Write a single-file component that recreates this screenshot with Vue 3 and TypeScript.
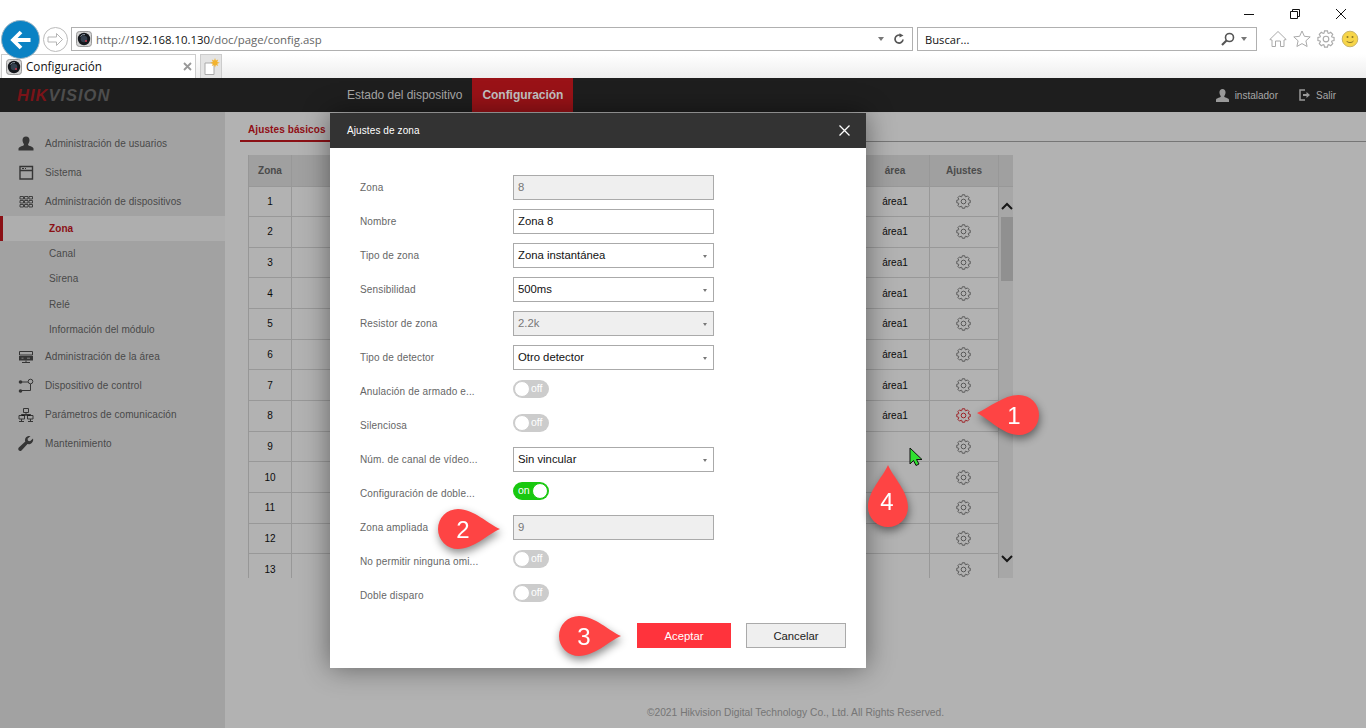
<template>
  <div class="screen">
    <!-- browser chrome -->
    <header class="chrome">
      <div class="win-controls">
        <svg width="12" height="12" viewBox="0 0 12 12"><path d="M1 6.500h10" stroke="#111" fill="none" /></svg>
        <svg width="12" height="12" viewBox="0 0 12 12"><path d="M1.500 3.500h7v7h-7zM3.500 3.500v-2h7v7h-2" stroke="#111" fill="none" /></svg>
        <svg width="12" height="12" viewBox="0 0 12 12"><path d="M1 1l10 10M11 1L1 11" stroke="#111" fill="none" /></svg>
      </div>
      <div class="nav-row">
        <div class="back">
          <svg width="24" height="22" viewBox="0 0 24 22"><path d="M21.500 11H5M12 3l-8 8 8 8" stroke="#fff" stroke-width="3.800" fill="none" /></svg>
        </div>
        <div class="forward">
          <svg width="17" height="15" viewBox="0 0 17 15"><path d="M1 5h8.500V1.500L15.500 7.500 9.500 13.500V10H1z" stroke="#b5b5b5" fill="#fff" /></svg>
        </div>
        <div class="address">
          <svg class="favicon" width="16" height="16" viewBox="0 0 16 16">
            <rect x=".5" y=".5" width="15" height="15" rx="3" fill="#d4d4d4" stroke="#999" />
            <circle cx="8" cy="8" r="6.200" fill="#14171c" />
            <circle cx="8" cy="8" r="3.300" fill="#34404e" />
            <path d="M4.500 5.500A4.500 4.500 0 0 1 9 3.600" stroke="#8a97a6" fill="none" />
            <circle cx="10" cy="10" r="1.100" fill="#c2344a" />
          </svg>
          <span class="url">http://<b>192.168.10.130</b>/doc/page/config.asp</span>
          <span class="caret"></span>
          <svg class="refresh" width="12" height="12" viewBox="0 0 12 12"><path d="M10 6.500A4 4 0 1 1 7.500 2.300" stroke="#555" stroke-width="1.700" fill="none" /><path d="M6.500 .2l4 2.300-4 2z" fill="#555" /></svg>
        </div>
        <div class="search">
          <span class="search-text">Buscar...</span>
          <svg class="magnifier" width="14" height="14" viewBox="0 0 14 14"><circle cx="8.500" cy="5.500" r="4" stroke="#555" stroke-width="1.600" fill="none" /><path d="M5.500 8.500L1 13" stroke="#555" stroke-width="2.200" /></svg>
          <span class="caret"></span>
        </div>
        <div class="tools">
          <svg width="18" height="18" viewBox="0 0 18 18"><path d="M.8 9.500L9 1.500l8.200 8-2.200.5v6.500h-3.500V11h-5v5.500H3V10z" stroke="#aaa" fill="#fff" /></svg>
          <svg width="18" height="18" viewBox="0 0 18 18"><path d="M9 1l2.400 5.300 5.800.6-4.300 3.900 1.200 5.700L9 13.600l-5.100 2.900 1.200-5.700L.8 6.900l5.800-.6z" stroke="#aaa" fill="#fff" /></svg>
          <svg width="18" height="18" viewBox="0 0 16 16"><path :d="gearPath" stroke="#aaa" fill="#fff" /><circle cx="8" cy="8" r="2.500" stroke="#aaa" fill="none" /></svg>
          <svg width="18" height="18" viewBox="0 0 18 18">
            <circle cx="9" cy="9" r="7.800" fill="#f7d548" stroke="#c9b46a" />
            <circle cx="6.500" cy="7" r="1" fill="#8a7628" /><circle cx="11.500" cy="7" r="1" fill="#8a7628" />
            <path d="M5.500 11c1.500 2 5.500 2 7 0" stroke="#8a7628" fill="none" />
          </svg>
        </div>
      </div>
      <div class="tab-row">
        <div class="tab">
          <svg width="16" height="16" viewBox="0 0 16 16">
            <rect x=".5" y=".5" width="15" height="15" rx="3" fill="#d4d4d4" stroke="#999" />
            <circle cx="8" cy="8" r="6.200" fill="#14171c" />
            <circle cx="8" cy="8" r="3.300" fill="#34404e" />
            <path d="M4.500 5.500A4.500 4.500 0 0 1 9 3.600" stroke="#8a97a6" fill="none" />
            <circle cx="10" cy="10" r="1.100" fill="#c2344a" />
          </svg>
          <span class="tab-title">Configuración</span>
          <svg class="tab-close" width="9" height="9" viewBox="0 0 9 9"><path d="M1 1l7 7M8 1L1 8" stroke="#999" stroke-width="1.800" /></svg>
        </div>
        <div class="new-tab">
          <svg width="18" height="18" viewBox="0 0 18 18">
            <path d="M3 5h9v11.500H3z" fill="#fff" stroke="#aaa" />
            <path d="M13 0l.9 2.600 2.300-1-1 2.300 2.600.9-2.600.9 1 2.300-2.300-1L13 9.600l-.9-2.600-2.300 1 1-2.300-2.600-.9 2.600-.9-1-2.300 2.300 1z" fill="#f3b32e" />
          </svg>
        </div>
      </div>
    </header>

    <!-- device page -->
    <div class="page">
      <div class="topbar">
        <div class="logo"><span class="logo-red">HIK</span>VISION</div>
        <nav class="main-nav">
          <a class="main-link">Estado del dispositivo</a>
          <a class="main-link main-link--active">Configuración</a>
        </nav>
        <div class="user-box">
          <svg width="13" height="13" viewBox="0 0 14 14"><path d="M7 0c2 0 3.300 1.500 3.300 3.700S9 7 8.800 8c0 1 4.700 1.500 5.200 3.500V14H0v-2.500C.5 9.500 5.200 9 5.200 8 5 7 3.700 5.900 3.700 3.700S5 0 7 0z" fill="#999" /></svg>
          <span class="user-name">instalador</span>
          <svg class="logout-icon" width="11" height="12" viewBox="0 0 11 12"><path d="M6 1H1v10h5" stroke="#999" stroke-width="1.500" fill="none" /><path d="M4 5h3.500V3L11 6 7.500 9V7H4z" fill="#999" /></svg>
          <span class="user-name">Salir</span>
        </div>
      </div>

      <div class="body">
        <aside class="sidebar">
          <div
            v-for="item in menu"
            :key="item.label"
            class="menu-item"
            :class="{ 'menu-item--sub': item.sub, 'menu-item--active': item.active }"
            :style="{ height: item.h + 'px' }"
          >
            <svg v-if="item.icon" class="menu-icon" width="16" height="16" viewBox="0 0 16 16" v-html="item.icon"></svg>
            <span>{{ item.label }}</span>
          </div>
        </aside>

        <main class="content">
          <div class="tabs"><span class="tabs-active">Ajustes básicos</span></div>
          <div class="table-wrap">
            <div class="table-head">
              <div class="cell cell--zona">Zona</div>
              <div class="cell cell--mid"></div>
              <div class="cell cell--area">área</div>
              <div class="cell cell--set">Ajustes</div>
              <div class="cell cell--bar"></div>
            </div>
            <div class="table-body">
              <div class="rows">
                <div v-for="n in 13" :key="n" class="row">
                  <div class="cell cell--zona">{{ n }}</div>
                  <div class="cell cell--mid"></div>
                  <div class="cell cell--area">{{ n <= 8 ? 'área1' : '' }}</div>
                  <div class="cell cell--set">
                    <svg class="gear" width="15" height="15" viewBox="0 0 16 16">
                      <path :d="gearPath" :stroke="n === 8 ? '#e0242c' : '#777'" fill="none" />
                      <circle cx="8" cy="8" r="2.500" :stroke="n === 8 ? '#e0242c' : '#777'" fill="none" />
                    </svg>
                  </div>
                </div>
              </div>
              <div class="scroll">
                <svg class="chev chev--up" width="12" height="8" viewBox="0 0 12 8"><path d="M1 7l5-5 5 5" stroke="#222" stroke-width="2" fill="none" /></svg>
                <div class="thumb"></div>
                <svg class="chev chev--down" width="12" height="8" viewBox="0 0 12 8"><path d="M1 1l5 5 5-5" stroke="#222" stroke-width="2" fill="none" /></svg>
              </div>
            </div>
          </div>
          <div class="copyright">©2021 Hikvision Digital Technology Co., Ltd. All Rights Reserved.</div>
        </main>
      </div>

      <div class="dim"></div>

      <!-- modal over the dimmed page -->
      <section class="modal">
        <div class="modal-head">
          <span>Ajustes de zona</span>
          <svg width="11" height="11" viewBox="0 0 11 11"><path d="M.5.5l10 10M10.500.5l-10 10" stroke="#fff" stroke-width="1.300" /></svg>
        </div>
        <div class="form">
          <div v-for="f in fields" :key="f.label" class="form-row">
            <label class="form-label">{{ f.label }}</label>
            <div v-if="f.kind === 'toggle'" class="toggle" :class="{ 'toggle--on': f.on }">
              <span class="toggle-text">{{ f.on ? 'on' : 'off' }}</span>
              <span class="knob"></span>
            </div>
            <div v-else class="field" :class="{ 'field--off': f.disabled }">
              {{ f.value }}
              <span v-if="f.kind === 'select'" class="field-caret"></span>
            </div>
          </div>
        </div>
        <div class="modal-foot">
          <button class="btn btn--ok">Aceptar</button>
          <button class="btn btn--cancel">Cancelar</button>
        </div>
      </section>
    </div>

    <!-- annotations -->
    <svg
      v-for="c in callouts"
      :key="c.text"
      class="callout"
      :class="'callout--' + c.text"
      :width="c.w"
      :height="c.h"
      :viewBox="`0 0 ${c.w} ${c.h}`"
    >
      <path :d="c.d" fill="#fe4444" />
      <text :x="c.tx" :y="c.ty" text-anchor="middle" class="callout-num">{{ c.text }}</text>
    </svg>
    <svg class="pointer" width="14" height="20" viewBox="0 0 14 20"><path d="M1 1v16l3.500-3.500L7 18.500l3-1.500-2.500-4.500H13z" fill="#2fe02f" stroke="#111" /></svg>
  </div>
</template>

<script setup lang="ts">
type Field = {
  label: string
  kind: 'text' | 'select' | 'toggle'
  value?: string
  disabled?: boolean
  on?: boolean
}

type MenuItem = {
  label: string
  h: number
  icon?: string
  sub?: boolean
  active?: boolean
}

const C = '#4c4c4c'

const menu: MenuItem[] = [
  { label: 'Administración de usuarios', h: 29, icon: `<path d="M8 .5c2.300 0 3.500 1.600 3.500 3.800S10 8 10 9c.5 1 5 1.300 5.500 3.500v2H.5v-2C1 10.300 5.500 10 6 9 6 8 4.500 6.500 4.500 4.300S5.700.5 8 .5z" fill="${C}"/>` },
  { label: 'Sistema', h: 29, icon: `<path d="M2 1.500h12.500v12.500H2zM2 5.500h12.500" stroke="${C}" stroke-width="1.400" fill="none"/><path d="M4 3.500h2M7 3.500h1" stroke="${C}"/>` },
  { label: 'Administración de dispositivos', h: 29, icon: `<path d="M2 2.500h3.500v2.500H2zM6.500 2.500H10v2.500H6.500zM11 2.500h3.500v2.500H11zM2 6.500h3.500v2.500H2zM6.500 6.500H10v2.500H6.500zM11 6.500h3.500v2.500H11zM2 10.500h3.500v2.500H2zM6.500 10.500H10v2.500H6.500zM11 10.500h3.500v2.500H11z" fill="none" stroke="${C}" stroke-width=".9"/>` },
  { label: 'Zona', h: 25, sub: true, active: true },
  { label: 'Canal', h: 25, sub: true },
  { label: 'Sirena', h: 25, sub: true },
  { label: 'Relé', h: 26, sub: true },
  { label: 'Información del módulo', h: 25, sub: true },
  { label: 'Administración de la área', h: 29, icon: `<path d="M1.500 2.500h13v3.500h-13z" stroke="${C}" fill="none"/><path d="M1 7h14v4.500H1z" fill="${C}"/><path d="M8 11.500v2M4 13.500h8" stroke="${C}"/><path d="M3.500 9.200h2M9 9.200h3" stroke="#bbb"/>` },
  { label: 'Dispositivo de control', h: 29, icon: `<circle cx="2.500" cy="4" r="1.800" fill="${C}"/><circle cx="2.500" cy="13" r="1.800" fill="${C}"/><circle cx="12.500" cy="3.500" r="2.300" stroke="${C}" fill="none"/><path d="M4 4h6M12.500 6v6.500H4" stroke="${C}" fill="none"/>` },
  { label: 'Parámetros de comunicación', h: 29, icon: `<path d="M5.500 1.500h5v4h-5zM1 8.500h5.500v3.500H1zM9.500 8.500H15v3.500H9.500z" stroke="${C}" fill="none"/><path d="M8 5.500V7.500M3.500 8.500v-1h9v1M3.500 12v2M12.500 12v2M1 14.500h5M10 14.500h5" stroke="${C}"/>` },
  { label: 'Mantenimiento', h: 29, icon: `<path d="M15 2.500l-3 2.800-2-.6-.5-2L12.500 0C10-.5 7 1 7 4c0 .7.100 1.200.3 1.600L.8 11.500c-.8.900-.7 2.300.1 3 .7.600 1.900.6 2.600-.1l6-6.300c3 .8 6.500-2 5.500-5.600z" fill="${C}"/>` }
]

const fields: Field[] = [
  { label: 'Zona', kind: 'text', value: '8', disabled: true },
  { label: 'Nombre', kind: 'text', value: 'Zona 8' },
  { label: 'Tipo de zona', kind: 'select', value: 'Zona instantánea' },
  { label: 'Sensibilidad', kind: 'select', value: '500ms' },
  { label: 'Resistor de zona', kind: 'select', value: '2.2k', disabled: true },
  { label: 'Tipo de detector', kind: 'select', value: 'Otro detector' },
  { label: 'Anulación de armado e...', kind: 'toggle' },
  { label: 'Silenciosa', kind: 'toggle' },
  { label: 'Núm. de canal de vídeo...', kind: 'select', value: 'Sin vincular' },
  { label: 'Configuración de doble...', kind: 'toggle', on: true },
  { label: 'Zona ampliada', kind: 'text', value: '9', disabled: true },
  { label: 'No permitir ninguna omi...', kind: 'toggle' },
  { label: 'Doble disparo', kind: 'toggle' }
]

const callouts = [
  { text: '1', w: 62, h: 40, tx: 37, ty: 29, d: 'M0 18 C12 13 26 0 42 0 A20 20 0 0 1 42 40 C26 40 12 24 0 18Z' },
  { text: '2', w: 62, h: 40, tx: 25, ty: 29, d: 'M62 20 C50 15 36 0 20 0 A20 20 0 0 0 20 40 C36 40 50 25 62 20Z' },
  { text: '3', w: 62, h: 40, tx: 25, ty: 29, d: 'M62 20 C50 15 36 0 20 0 A20 20 0 0 0 20 40 C36 40 50 25 62 20Z' },
  { text: '4', w: 40, h: 62, tx: 19, ty: 45, d: 'M20 0 C25 12 40 26 40 42 A20 20 0 0 1 0 42 C0 26 15 12 20 0Z' }
]

// contorno de engranaje de 8 dientes, centrado en 8,8
const gearPath = (() => {
  const pts: string[] = []
  const step = Math.PI / 4
  for (let i = 0; i < 8; i++) {
    const a = i * step - Math.PI / 2
    const list: [number, number][] = [
      [5.6, a - 0.32],
      [7.3, a - 0.18],
      [7.3, a + 0.18],
      [5.6, a + 0.32]
    ]
    for (const [r, t] of list) {
      pts.push(`${(8 + r * Math.cos(t)).toFixed(2)} ${(8 + r * Math.sin(t)).toFixed(2)}`)
    }
  }
  return 'M' + pts.join('L') + 'Z'
})()
</script>

<style scoped>
.screen {
  position: relative;
  width: 1366px;
  height: 728px;
  overflow: hidden;
  background: #fff;
  font-family: "Liberation Sans", Arial, sans-serif;
}

/* chrome */
.chrome {
  height: 78px;
  background: #fff;
  font-family: "Open Sans", "Noto Sans", sans-serif;
  font-size: 12px;
  color: #111;
}

.win-controls {
  height: 27px;
  display: flex;
  justify-content: flex-end;
  align-items: flex-start;
  gap: 34px;
  padding: 8px 19px 0 0;
  box-sizing: border-box;
}

.nav-row {
  display: flex;
  align-items: center;
  height: 24px;
}

.back {
  width: 37px;
  height: 37px;
  margin-left: 1px;
  margin-top: 1px;
  border-radius: 50%;
  background: #0a82c4;
  border: 1px solid #9fb6c4;
  display: flex;
  align-items: center;
  justify-content: center;
  flex: none;
  box-sizing: content-box;
  position: relative;
  z-index: 1;
}

.forward {
  width: 23px;
  height: 23px;
  margin-left: 3px;
  border: 1px solid #bbb;
  border-radius: 50%;
  display: flex;
  align-items: center;
  justify-content: center;
  flex: none;
}

.address,
.search {
  height: 24px;
  box-sizing: border-box;
  border: 1px solid #b0b0b0;
  display: flex;
  align-items: center;
}

.address {
  width: 842px;
  margin-left: 3px;
  padding-left: 4px;
}

.url {
  margin-left: 4px;
  color: #666;
  flex: 1;
  font-size: 11.400px;
}

.url b {
  font-weight: 400;
  color: #111;
}

.caret {
  width: 0;
  height: 0;
  border: 3.500px solid transparent;
  border-top: 4px solid #777;
  border-bottom: 0;
}

.refresh {
  margin: 0 7px 0 9px;
}

.search {
  width: 340px;
  margin-left: 4px;
  padding: 0 9px 0 7px;
}

.search-text {
  flex: 1;
  font-size: 11.200px;
}

.magnifier {
  margin-right: 6px;
}

.tools {
  display: flex;
  gap: 6px;
  margin-left: 12px;
}

.tab-row {
  margin-top: 3px;
  height: 24px;
  display: flex;
  align-items: stretch;
  background: linear-gradient(#fff, #eee);
}

.tab {
  position: relative;
  width: 195px;
  margin-left: 1px;
  box-sizing: border-box;
  border: 1px solid #ccc;
  border-bottom: 0;
  background: #fff;
  display: flex;
  align-items: center;
  padding-left: 4px;
}

.tab-title {
  margin-left: 4px;
  flex: 1;
  font-size: 11.700px;
  line-height: 20px;
  margin-top: -2px;
}

.tab-close {
  margin-right: 3px;
}

.new-tab {
  width: 22px;
  margin-left: 4px;
  background: #e4e4e4;
  border: 1px solid #ccc;
  border-bottom: 0;
  box-sizing: border-box;
  display: flex;
  align-items: center;
  justify-content: center;
}

/* page */
.page {
  position: relative;
  height: 650px;
  background: #fff;
}

.topbar {
  height: 34px;
  background: #1e1e1e;
  position: relative;
  z-index: 3;
  display: flex;
  align-items: stretch;
}

.logo {
  width: 330px;
  padding-left: 17px;
  box-sizing: border-box;
  font-size: 16.500px;
  font-weight: 700;
  font-style: italic;
  line-height: 34px;
  color: #4d4d4d;
  letter-spacing: 1px;
}

.logo-red {
  color: #7a1318;
}

.main-nav {
  display: flex;
  margin-left: 7px;
}

.main-link {
  padding: 0 10px;
  font-size: 12px;
  line-height: 34px;
  color: #aaa;
  letter-spacing: -0.03px;
}

.main-link--active {
  background: #9a1217;
  color: #c4c4c4;
  font-weight: 700;
}

.user-box {
  margin-left: auto;
  display: flex;
  align-items: center;
  padding-right: 30px;
  font-size: 10px;
  color: #a8a8a8;
}

.user-name {
  margin-left: 6px;
}

.logout-icon {
  margin-left: 21px;
}

.body {
  display: flex;
  height: 616px;
}

.sidebar {
  width: 225px;
  flex: none;
  background: #e9e9e9;
  padding-top: 17px;
  box-sizing: border-box;
}

.menu-item {
  display: flex;
  align-items: center;
  padding-left: 18px;
  font-size: 10px;
  letter-spacing: 0.08px;
  color: #6a6a6a;
  box-sizing: border-box;
}

.menu-icon {
  margin-right: 11px;
  flex: none;
}

.menu-item--sub {
  padding-left: 49px;
}

.menu-item--active {
  background: #f9f9f9;
  border-left: 3px solid #c8171f;
  padding-left: 46px;
  color: #c8171f;
  font-weight: 700;
}

.content {
  flex: 1;
  padding-left: 23px;
  position: relative;
  background: #fff;
}

.tabs {
  height: 30px;
  margin-left: -8px;
  box-sizing: border-box;
  border-bottom: 1px solid #aaa;
  padding-top: 12px;
}

.tabs-active {
  display: block;
  width: 90px;
  height: 18px;
  box-sizing: border-box;
  border-bottom: 2px solid #c8171f;
  padding-left: 8px;
  font-size: 10px;
  line-height: 12px;
  font-weight: 700;
  letter-spacing: 0.1px;
  color: #d0151e;
  white-space: nowrap;
}

.table-wrap {
  width: 765px;
  margin-top: 13px;
  height: 423px;
  overflow: hidden;
  border-left: 1px solid #d9d9d9;
  box-sizing: border-box;
}

.table-head {
  display: flex;
  height: 31.500px;
  background: #e5e5e5;
  font-size: 10px;
  font-weight: 700;
  color: #6c6c6c;
}

.table-body {
  display: flex;
}

.rows {
  flex: 1;
}

.row {
  display: flex;
  height: 30.670px;
  box-sizing: border-box;
  border-bottom: 1px solid #dadada;
  font-size: 10px;
  color: #111;
}

.cell {
  display: flex;
  align-items: center;
  justify-content: center;
  border-right: 1px solid #dadada;
  box-sizing: border-box;
  flex: none;
}

.cell--zona {
  width: 43px;
}

.cell--mid {
  width: 569px;
}

.cell--area {
  width: 69px;
}

.cell--set {
  width: 69px;
}

.cell--bar {
  width: 15px;
  border-right: 0;
}

.table-head .cell {
  border-bottom: 1px solid #dadada;
}

.gear {
  margin-right: 1px;
}

.scroll {
  position: relative;
  width: 15px;
  flex: none;
  background: #f0f0f0;
}

.thumb {
  position: absolute;
  left: 2px;
  top: 30px;
  width: 12px;
  height: 64px;
  background: #cfcfcf;
}

.chev {
  position: absolute;
  left: 2px;
}

.chev--up {
  top: 15px;
}

.chev--down {
  top: 368px;
}

.copyright {
  position: absolute;
  left: 0;
  top: 595px;
  width: 1141px;
  text-align: center;
  font-size: 10.280px;
  color: #aaa;
}

.dim {
  position: absolute;
  inset: 34px 0 0 0;
  background: rgba(0, 0, 0, 0.3);
  z-index: 2;
}

/* modal */
.modal {
  position: absolute;
  left: 330px;
  top: 35px;
  width: 536px;
  height: 555px;
  background: #fff;
  z-index: 4;
  box-shadow: 0 0 26px rgba(0, 0, 0, 0.45);
}

.modal-head {
  height: 35px;
  background: #333;
  color: #fff;
  font-size: 10px;
  letter-spacing: 0.1px;
  display: flex;
  align-items: center;
  justify-content: space-between;
  padding: 0 16px 0 17px;
}

.form {
  padding: 27px 0 0 30px;
  display: grid;
  row-gap: 9px;
}

.form-row {
  display: flex;
  height: 25px;
  align-items: center;
}

.form-label {
  width: 153px;
  font-size: 10px;
  letter-spacing: 0.15px;
  color: #666;
}

.field {
  position: relative;
  width: 201px;
  height: 25px;
  box-sizing: border-box;
  border: 1px solid #aaa;
  padding-left: 4px;
  font-size: 11.300px;
  line-height: 22px;
  color: #111;
}

.field--off {
  background: #efefef;
  color: #777;
}

.field-caret {
  position: absolute;
  right: 6px;
  top: 11px;
  border: 2.500px solid transparent;
  border-top: 3px solid #777;
  border-bottom: 0;
}

.toggle {
  position: relative;
  width: 36px;
  height: 18px;
  margin-bottom: 5px;
  border-radius: 9px;
  background: #ccc;
}

.toggle--on {
  background: #19c80f;
}

.knob {
  position: absolute;
  left: 1px;
  top: 1px;
  width: 14px;
  height: 14px;
  border: 1px solid #ccc;
  border-radius: 50%;
  background: #fff;
}

.toggle--on .knob {
  left: auto;
  right: 1px;
  border-color: #19c80f;
}

.toggle-text {
  position: absolute;
  left: 18px;
  top: 2px;
  font-size: 10.500px;
  line-height: 13px;
  color: #fff;
}

.toggle--on .toggle-text {
  left: 5px;
}

.modal-foot {
  display: flex;
  justify-content: flex-end;
  gap: 15px;
  padding: 15px 20px 0 0;
}

.btn {
  height: 25px;
  font-family: "Liberation Sans", Arial, sans-serif;
  font-size: 11.300px;
  padding: 0;
  box-sizing: border-box;
}

.btn--ok {
  width: 94px;
  border: 0;
  background: #ff333c;
  color: #fff;
}

.btn--cancel {
  width: 100px;
  border: 1px solid #aaa;
  background: #efefef;
  color: #222;
}

/* anotaciones */
.callout {
  position: absolute;
  z-index: 6;
  overflow: visible;
  filter: drop-shadow(1px 4px 4px rgba(0, 0, 0, 0.45));
}

.callout-num {
  font-family: "Liberation Sans", Arial, sans-serif;
  font-size: 24px;
  fill: #fff;
}

.callout--1 {
  left: 977px;
  top: 395px;
}

.callout--2 {
  left: 438px;
  top: 509px;
}

.callout--3 {
  left: 559px;
  top: 616px;
}

.callout--4 {
  left: 868px;
  top: 465px;
}

.pointer {
  position: absolute;
  z-index: 7;
  left: 909px;
  top: 447px;
}
</style>

<style>
html,
body {
  margin: 0;
  overflow: hidden;
}
</style>
